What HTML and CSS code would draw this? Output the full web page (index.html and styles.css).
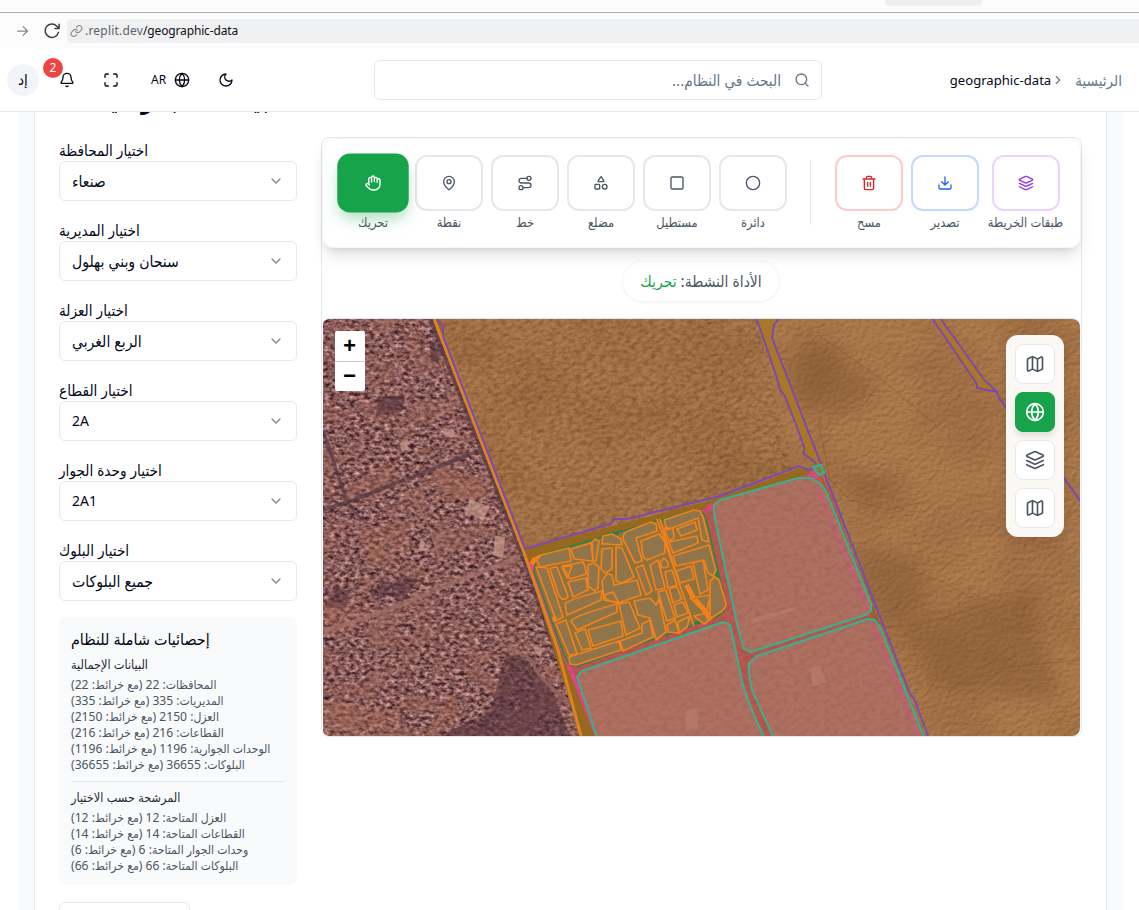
FILE: index.html
```html
<!DOCTYPE html>
<html lang="ar">
<head>
<meta charset="utf-8">
<title>geographic-data</title>
<link rel="stylesheet" href="styles.css">
</head>
<body>
<svg class="defs" width="0" height="0">
  <symbol id="i-map" viewBox="0 0 24 24"><path d="M14.106 5.553a2 2 0 0 0 1.788 0l3.659-1.83A1 1 0 0 1 21 4.619v12.764a1 1 0 0 1-.553.894l-4.553 2.277a2 2 0 0 1-1.788 0l-4.212-2.106a2 2 0 0 0-1.788 0l-3.659 1.83A1 1 0 0 1 3 19.381V6.618a1 1 0 0 1 .553-.894l4.553-2.277a2 2 0 0 1 1.788 0zM15 5.764v15M9 3.236v15"/></symbol>
  <symbol id="i-globe" viewBox="0 0 24 24"><circle cx="12" cy="12" r="10"/><path d="M12 2a14.5 14.5 0 0 0 0 20 14.5 14.5 0 0 0 0-20M2 12h20"/></symbol>
  <symbol id="i-layers" viewBox="0 0 24 24"><path d="m12.83 2.18a2 2 0 0 0-1.66 0L2.6 6.08a1 1 0 0 0 0 1.83l8.58 3.91a2 2 0 0 0 1.66 0l8.58-3.9a1 1 0 0 0 0-1.83ZM22 17.65l-9.17 4.16a2 2 0 0 1-1.66 0L2 17.65M22 12.65l-9.17 4.16a2 2 0 0 1-1.66 0L2 12.65"/></symbol>
  <symbol id="i-down" viewBox="0 0 24 24"><path d="m6 9 6 6 6-6"/></symbol>
</svg>

<div class="tabs"><span class="tab"></span></div>
<div class="browser">
  <svg class="ic forward" width="16" height="16" viewBox="0 0 24 24"><path d="M4 12h16M13 5l7 7-7 7"/></svg>
  <svg class="ic reload" width="18" height="18" viewBox="0 0 24 24"><path d="M20.500 14a9 9 0 1 1-2-8.400L21 8M21.500 3v5.500H16"/></svg>
  <div class="url">
    <svg class="ic link" width="14" height="14" viewBox="0 0 24 24"><path d="M10 13a5 5 0 0 0 7.540.540l3-3a5 5 0 0 0-7.070-7.070l-1.720 1.710M14 11a5 5 0 0 0-7.540-.540l-3 3a5 5 0 0 0 7.070 7.070l1.710-1.710"/></svg>
    <span class="host">.replit.dev</span><span class="path">/geographic-data</span>
  </div>
</div>

<header class="header">
  <div class="avatar">إد</div>
  <div class="bell">
    <svg class="ic" width="16" height="16" viewBox="0 0 24 24"><path d="M10.268 21a2 2 0 0 0 3.464 0M3.262 15.326A1 1 0 0 0 4 17h16a1 1 0 0 0 .740-1.673C19.410 13.956 18 12.499 18 8A6 6 0 0 0 6 8c0 4.499-1.411 5.956-2.738 7.326"/></svg>
    <span class="badge">2</span>
  </div>
  <svg class="ic full" width="16" height="16" viewBox="0 0 24 24"><path d="M8 3H5a2 2 0 0 0-2 2v3M21 8V5a2 2 0 0 0-2-2h-3M3 16v3a2 2 0 0 0 2 2h3M16 21h3a2 2 0 0 0 2-2v-3"/></svg>
  <span class="lang">AR</span>
  <svg class="ic globe" width="16" height="16"><use href="#i-globe"/></svg>
  <svg class="ic moon" width="16" height="16" viewBox="0 0 24 24"><path d="M12 3a6 6 0 0 0 9 9 9 9 0 1 1-9-9Z"/></svg>
  <div class="search">
    <span dir="rtl">البحث في النظام...</span>
    <svg class="ic" width="16" height="16" viewBox="0 0 24 24"><circle cx="11" cy="11" r="8"/><path d="m21 21-4.300-4.300"/></svg>
  </div>
  <nav class="crumbs">
    <span class="current">geographic-data</span>
    <svg class="ic" width="14" height="14" viewBox="0 0 24 24"><path d="m9 18 6-6-6-6"/></svg>
    <span class="home" dir="rtl">الرئيسية</span>
  </nav>
</header>

<main class="page">
 <section class="card">
  <div class="title-clip"><h3 class="title" dir="rtl">البيانات الجغرافية</h3></div>
  <div class="cols">
  <aside class="side">
    <div class="field"><label dir="rtl">اختيار المحافظة</label><div class="select"><span dir="rtl">صنعاء</span><svg class="ic" width="16" height="16"><use href="#i-down"/></svg></div></div>
    <div class="field"><label dir="rtl">اختيار المديرية</label><div class="select"><span dir="rtl">سنحان وبني بهلول</span><svg class="ic" width="16" height="16"><use href="#i-down"/></svg></div></div>
    <div class="field"><label dir="rtl">اختيار العزلة</label><div class="select"><span dir="rtl">الربع الغربي</span><svg class="ic" width="16" height="16"><use href="#i-down"/></svg></div></div>
    <div class="field"><label dir="rtl">اختيار القطاع</label><div class="select"><span class="latin">2A</span><svg class="ic" width="16" height="16"><use href="#i-down"/></svg></div></div>
    <div class="field"><label dir="rtl">اختيار وحدة الجوار</label><div class="select"><span class="latin">2A1</span><svg class="ic" width="16" height="16"><use href="#i-down"/></svg></div></div>
    <div class="field"><label dir="rtl">اختيار البلوك</label><div class="select"><span dir="rtl">جميع البلوكات</span><svg class="ic" width="16" height="16"><use href="#i-down"/></svg></div></div>
    <div class="stats" dir="rtl">
      <h4>إحصائيات شاملة للنظام</h4>
      <h5>البيانات الإجمالية</h5>
      <p>المحافظات: 22 (مع خرائط: 22)</p>
      <p>المديريات: 335 (مع خرائط: 335)</p>
      <p>العزل: 2150 (مع خرائط: 2150)</p>
      <p>القطاعات: 216 (مع خرائط: 216)</p>
      <p>الوحدات الجوارية: 1196 (مع خرائط: 1196)</p>
      <p>البلوكات: 36655 (مع خرائط: 36655)</p>
      <hr>
      <h5>المرشحة حسب الاختيار</h5>
      <p>العزل المتاحة: 12 (مع خرائط: 12)</p>
      <p>القطاعات المتاحة: 14 (مع خرائط: 14)</p>
      <p>وحدات الجوار المتاحة: 6 (مع خرائط: 6)</p>
      <p>البلوكات المتاحة: 66 (مع خرائط: 66)</p>
    </div>
    <div class="more"></div>
  </aside>

  <div class="viewer">
    <div class="toolbar">
      <div class="tool on"><button><svg class="ic" width="16" height="16" viewBox="0 0 24 24"><path d="M18 11V6a2 2 0 0 0-4 0M14 10V4a2 2 0 0 0-4 0v2M10 10.500V6a2 2 0 0 0-4 0v8M18 8a2 2 0 1 1 4 0v6a8 8 0 0 1-8 8h-2c-2.800 0-4.500-.860-5.990-2.340l-3.600-3.600a2 2 0 0 1 2.830-2.820L7 15"/></svg></button><span>تحريك</span></div>
      <div class="tool"><button><svg class="ic" width="16" height="16" viewBox="0 0 24 24"><path d="M20 10c0 4.993-5.539 10.193-7.399 11.799a1 1 0 0 1-1.202 0C9.539 20.193 4 14.993 4 10a8 8 0 0 1 16 0"/><circle cx="12" cy="10" r="3"/></svg></button><span>نقطة</span></div>
      <div class="tool"><button><svg class="ic" width="16" height="16" viewBox="0 0 24 24"><circle cx="6" cy="19" r="3"/><path d="M9 19h8.500a3.500 3.500 0 0 0 0-7h-11a3.500 3.500 0 0 1 0-7H15"/><circle cx="18" cy="5" r="3"/></svg></button><span>خط</span></div>
      <div class="tool"><button><svg class="ic" width="16" height="16" viewBox="0 0 24 24"><path d="M8.300 10a.7.7 0 0 1-.626-1.079L11.400 3a.7.7 0 0 1 1.198-.043L16.300 8.900a.7.7 0 0 1-.572 1.100Z"/><rect x="3" y="14" width="7" height="7" rx="1"/><circle cx="17.500" cy="17.500" r="3.500"/></svg></button><span>مضلع</span></div>
      <div class="tool"><button><svg class="ic" width="16" height="16" viewBox="0 0 24 24"><rect x="3" y="3" width="18" height="18" rx="2"/></svg></button><span>مستطيل</span></div>
      <div class="tool"><button><svg class="ic" width="16" height="16" viewBox="0 0 24 24"><circle cx="12" cy="12" r="10"/></svg></button><span>دائرة</span></div>
      <i class="rule"></i>
      <div class="tool red"><button><svg class="ic" width="16" height="16" viewBox="0 0 24 24"><path d="M3 6h18M19 6v14c0 1-1 2-2 2H7c-1 0-2-1-2-2V6M8 6V4c0-1 1-2 2-2h4c1 0 2 1 2 2v2M10 11v6M14 11v6"/></svg></button><span>مسح</span></div>
      <div class="tool blue"><button><svg class="ic" width="16" height="16" viewBox="0 0 24 24"><path d="M21 15v4a2 2 0 0 1-2 2H5a2 2 0 0 1-2-2v-4M7 10l5 5 5-5M12 15V3"/></svg></button><span>تصدير</span></div>
      <div class="tool purple"><button><svg class="ic" width="16" height="16"><use href="#i-layers"/></svg></button><span>طبقات الخريطة</span></div>
    </div>
    <div class="status" dir="rtl">الأداة النشطة: <b>تحريك</b></div>
    <div class="map">
      <svg class="canvas" viewBox="323 319 757 417" width="757" height="417">
        <defs>
          <filter id="city" x="0" y="0" width="1" height="1" color-interpolation-filters="sRGB">
            <feTurbulence type="fractalNoise" baseFrequency=".2 .29" numOctaves="3" seed="7" result="n"/>
            <feColorMatrix in="n" type="matrix" values="1.500 0 0 0 -.230  1.300 .1 0 0 -.350  1.200 .15 0 0 -.320  0 0 0 0 1"/>
          </filter>
          <filter id="earth" x="0" y="0" width="1" height="1" color-interpolation-filters="sRGB">
            <feTurbulence type="fractalNoise" baseFrequency=".03 .04" numOctaves="4" seed="21"/>
            <feColorMatrix type="matrix" values="0 0 0 0 .610  0 0 0 0 .395  0 0 0 0 .345  4 0 0 0 -1.800"/>
          </filter>
          <filter id="sand" x="0" y="0" width="1" height="1" color-interpolation-filters="sRGB">
            <feTurbulence type="fractalNoise" baseFrequency=".2 .25" numOctaves="3" seed="12"/>
            <feDiffuseLighting surfaceScale=".5" lighting-color="#be8653"><feDistantLight azimuth="230" elevation="62"/></feDiffuseLighting>
          </filter>
          <filter id="patches" x="0" y="0" width="1" height="1" color-interpolation-filters="sRGB">
            <feTurbulence type="fractalNoise" baseFrequency=".012 .018" numOctaves="3" seed="4"/>
            <feColorMatrix type="matrix" values="0 0 0 0 .350  0 0 0 0 .190  0 0 0 0 .090  1.600 0 0 0 -.680"/>
          </filter>
          <filter id="grain" x="0" y="0" width="1" height="1" color-interpolation-filters="sRGB">
            <feTurbulence type="fractalNoise" baseFrequency=".16 .24" numOctaves="3" seed="9"/>
            <feColorMatrix type="matrix" values="0 0 0 0 .300  0 0 0 0 .160  0 0 0 0 .120  2 0 0 0 -.850"/>
          </filter>
          <filter id="soft"><feGaussianBlur stdDeviation="9"/></filter>
          <clipPath id="west"><path d="M323 319H434L522 545 588 736H323Z"/></clipPath>
          <clipPath id="plots"><path d="M532 560 712 505 720 498 808 474 830 489 925 736H596L560 650Z"/></clipPath>
          <clipPath id="town"><path d="M443 325 525 549 720 498 795 469 756 319H440Z"/></clipPath>
        </defs>
        <rect x="323" y="319" width="757" height="417" fill="#a4723f" filter="url(#sand)"/>
        <g clip-path="url(#town)" opacity=".38"><rect x="434" y="319" width="370" height="232" filter="url(#grain)"/></g>
        <rect x="323" y="319" width="757" height="417" filter="url(#patches)" opacity=".22"/>
        <g filter="url(#soft)" fill="#6e4526" opacity=".32"><path d="M790 365 815 340 878 385 860 405 825 415 790 395ZM840 480 890 478 880 500 850 495ZM855 540 920 560 930 600 890 630 860 590ZM900 620 1030 590 1060 700 930 690Z"/></g>
        <g stroke="#80552f" stroke-width="1" fill="none" opacity=".5"><path d="M774 380 818 335 880 378 936 425M826 415 860 410 878 385M818 420 830 480 850 500 890 510 930 500M885 627 920 625 1000 600M943 690 1000 668 1080 660M880 560 940 580 975 600 1010 592M860 615 930 545"/></g>
        <g clip-path="url(#west)">
          <rect x="323" y="319" width="270" height="417" filter="url(#city)"/>
          <rect x="323" y="319" width="270" height="417" fill="#8c5f5a" opacity=".3"/>
          <rect x="323" y="319" width="270" height="417" filter="url(#earth)" opacity=".5"/>
          <g fill="#50303a" opacity=".55"><path d="M506 655 523 656 552 690 570 736H440L490 711ZM382 579 394 585 384 598 370 594ZM402 574 418 580 402 602 388 595ZM334 585 350 592 345 608 325 608ZM430 340 440 345 439 365 431 360ZM378 397 405 395 402 412 376 416Z"/></g>
          <g fill="#a96954" opacity=".3"><path d="M430 470 475 475 493 500 440 500ZM360 530 410 520 408 550 370 560ZM328 600 380 610 340 640 323 635ZM323 700 400 710 400 736H323ZM432 720 455 692 460 715 440 736H425Z"/></g>
          <g fill="#c69a8a" opacity=".7"><path d="M400 443 408 439 407 449 401 450ZM469 499 490 507 483 520 467 512ZM495 536 505 537 503 558 493 555ZM532 647 543 648 540 658ZM420 541 425 542 424 551 419 551ZM445 428 456 432 453 438 443 435Z"/></g>
          <g fill="none" stroke="#553a45" opacity=".7"><path d="M323 510 347 502 420 474 478 451" stroke-width="4"/><path d="M323 430 333 460 347 502 361 520" stroke-width="3.500"/><path d="M433 319 521 545 588 736" stroke-width="9"/></g>
          <g fill="none" stroke="#a17068" opacity=".7"><path d="M323 632 380 613 455 582 520 557" stroke-width="5"/><path d="M385 320 398 365 408 410M440 360 460 440M405 478 430 530 440 560M376 630 378 690" stroke-width="2"/></g>
          <path d="M520 655Q530 655 535 668T575 705L588 736" fill="none" stroke="#8c625c" stroke-width="3"/>
        </g>
        <path d="M522 545 525 549 720 498 800 468 812 471 808 476 720 500 712 507 534 562 596 736H580Z" fill="#96691f"/>
        <path d="M436 319H441L443 336 526 549 522 549Z" fill="#94662c"/>
        <g fill="#aa7627" stroke="#7c4bac" stroke-width="2" stroke-linejoin="round">
          <path d="M756 317 777 378 780 390 785 396 804 446 804 454 815 462 818 470 822 467 772 338 774 325 779 318"/>
          <path d="M932 318 977 384 977 388 997 392 989 384 985 381 940 318"/>
        </g>
        <path d="M532 560 540 555 712 507 714 501 722 500 808 474 820 472 830 489 871 612 925 736H596L560 650Z" fill="#b95750"/>
        <path d="M820 472 866 590 925 736H917L868 616 824 489Z" fill="#99632d"/>
        <g stroke="#e3458b" fill="none"><path d="M530 562 565 656 597 736" stroke-width="4"/><path d="M532 560 650 526 697 515 712 503" stroke-width="1.300"/><path d="M703 512 714 503 714 511ZM806 476 813 470 820 474 816 480Z" fill="#d94b76" stroke="none"/><path d="M815 480 868 613 922 736" stroke-width="3" opacity=".65"/></g>
        <path d="M434 319 523 550 558 650 581 736" stroke="#de831f" fill="none" stroke-width="3"/>
        <g stroke="#7c4bac" stroke-width="2" fill="none"><path d="M437 319 443 326 443 336 525 549 610 524 615 519 627 519 720 496 797 467 798 466 809 470 817 468M822 467 910 694 915 700 919 712 928 736M997 392 999 398 1006 407M1064 478 1081 502"/></g>
        <g fill="#ae7060">
          <path d="M714 505 720 500 798 478 811 478 821 484 826 491 871 604 871 611 865 615 751 652 744 649Q739 632 737 624L714 515Z"/>
          <path d="M749 663 757 656 868 619 875 620 880 627 924 737H773L752 690Q748 675 749 663Z"/>
          <path d="M577 677 582 671 723 622 730 625 732 633 742 681Q747 701 764 737H597Z"/>
        </g>
        <path d="M817 488 868 611M872 624 918 736" stroke="#c85a80" stroke-width="2" fill="none"/>
        <g clip-path="url(#plots)" opacity=".15"><rect x="530" y="474" width="400" height="262" filter="url(#grain)"/></g>
        <g fill="#b98274" opacity=".5"><path d="M751 619 794 607 795 611 752 624ZM810 668 820 665 826 682 813 687ZM686 710 697 708 698 728 686 730Z"/></g>
        <g fill="none" stroke="#37b18e" stroke-width="2" stroke-linejoin="round">
          <path d="M714 505 720 500 798 478 811 478 821 484 826 491 871 604 871 611 865 615 751 652 744 649Q739 632 737 624L714 515Z"/>
          <path d="M749 663 757 656 868 619 875 620 880 627 924 737H773L752 690Q748 675 749 663Z"/>
          <path d="M577 677 582 671 723 622 730 625 732 633 742 681Q747 701 764 737H597Z"/>
        </g>
        <path d="M813 467 821 465 824 473 819 475Z" fill="#7d8045" stroke="#37b18e" stroke-width="2"/>
        <path d="M536 560 541 555 694 510Q703 510 706 518L726 605Q726 613 716 617L578 666Q568 667 564 655L534 572Z" fill="#8c7340" stroke="#2f804b" stroke-width="1.500"/>
        <path d="M603 534 622 530 618 535 603 540ZM691 625 694 622 712 617 706 622ZM716 580 719 577 716 563 710 550ZM661 520 676 515 664 524Z" fill="#2f804b"/>
        <g fill="#90744a" stroke="#f38119" stroke-width="1.700" stroke-linejoin="round">
          <path d="M536 559Q537 556 541 555L569 548 571 561 540 567ZM571 549 591 543 593 561 574 559ZM592 542 595 539 599 541 596 561 593 561ZM536 567 547 568 563 617 556 621 553 612ZM550 569Q552 567 557 567L568 596Q566 600 562 599 558 596 557 590ZM562 566 583 562Q586 567 586 574L570 579ZM562 567 572 566 567 578ZM568 582 586 578 588 590 573 597ZM588 565 594 563 599 567 598 588 595 591 588 586ZM602 549 612 548 612 569 605 573 601 569ZM602 544 603 536 612 534 621 539 622 545 608 544ZM616 547 622 548 634 577 622 583 616 581ZM624 541Q621 534 628 531L651 522 656 524 657 531 636 538 642 561 635 563ZM641 541 659 534 665 542 665 553 647 560 643 557ZM664 520 694 510 700 511 703 517 709 542 702 540 698 518 667 530ZM664 528 673 528 674 538 669 541ZM677 529 695 522 697 530 681 536ZM669 542 697 536 698 543 673 553ZM673 556 709 545 716 570 713 576 708 573 704 560 676 566ZM676 571 691 566 694 579 680 583ZM693 563 703 560 708 590 700 594ZM636 568 643 565 652 591 646 595ZM650 565 658 560 665 588 656 590ZM660 562 664 558 668 562 668 567 662 568ZM565 604Q567 600 602 591L601 600 567 615ZM602 581 607 574 612 575 614 585 637 580 641 595 618 603 604 600ZM604 595 613 592 619 603 607 600ZM571 621Q573 616 617 604L617 612 577 630ZM619 604 629 602 640 628 626 635ZM634 601 650 598 656 605 659 599 666 632 656 640 650 618 638 615ZM658 592 666 590 675 618 667 621ZM556 624 566 620 577 654 569 655ZM575 633 585 629 591 648 582 650ZM588 630 621 621 623 636 593 646ZM569 657 619 641 621 650 576 665 570 664ZM620 641 642 633 642 624 650 620 653 637 623 651ZM665 572 672 570 677 585 668 588ZM669 588 677 587 682 599 673 603ZM674 605 683 602 688 613 677 617ZM690 598 710 595 707 611 699 607ZM710 581 715 577 719 580 726 604Q726 609 719 613L710 619ZM667 625 675 620 679 633 668 632ZM678 622 690 616 687 627 679 633ZM694 616 706 613 712 618 704 624Z"/>
        </g>
        <path d="M657 519 694 626M660 519 677 577" stroke="#f38119" stroke-width="1.800" fill="none"/>
        <path d="M684 586 689 584 696 597 692 600ZM693 600 697 598 710 613 708 621 704 614ZM530 563 532 558 543 554 537 561 533 566ZM552 617 556 616 557 621 553 622Z" fill="#f38119"/>
      </svg>
      <div class="zoom"><span>+</span><span>−</span></div>
      <div class="switch">
        <button><svg class="ic" width="20" height="20"><use href="#i-map"/></svg></button>
        <button class="on"><svg class="ic" width="20" height="20"><use href="#i-globe"/></svg></button>
        <button><svg class="ic" width="20" height="20"><use href="#i-layers"/></svg></button>
        <button><svg class="ic" width="20" height="20"><use href="#i-map"/></svg></button>
      </div>
    </div>
  </div>
  </div>
 </section>
</main>
</body>
</html>
```

FILE: styles.css
```css
* { box-sizing: border-box; }
body { margin: 0; height: 910px; overflow: hidden; background: #fff; color: #020817; font: 14px/20px "Noto Sans", "DejaVu Sans Condensed", "DejaVu Sans", sans-serif; }
h3, h4, h5, p { margin: 0; font-weight: 400; }
button { padding: 0; background: #fff; color: inherit; font: inherit; }
.defs { display: block; position: absolute; }
.ic { display: block; flex: none; fill: none; stroke: currentColor; stroke-width: 2; stroke-linecap: round; stroke-linejoin: round; }

.tabs { height: 13px; background: #fcfcfc; border-bottom: 1px solid #adadad; padding-left: 885px; }
.tab { display: block; width: 97px; height: 6px; background: #efeff1; border-radius: 0 0 4px 4px; }
.browser { height: 35px; background: #fcfcfc; display: flex; align-items: center; padding-left: 15px; }
.forward, .link { color: #85888c; }
.forward { width: 15px; }
.reload { margin: 0 7px 0 13px; color: #3c4043; }
.url { flex: 1; height: 24px; margin-left: -1px; background: #eff0f2; border-radius: 4px 0 0 4px; display: flex; align-items: center; padding-left: 3px; font-size: 12px; }
.link { width: 13px; margin-right: 1px; }
.host { color: #5f6368; margin-left: 1px; letter-spacing: .2px; }
.path { color: #111; letter-spacing: -.15px; }

.header { height: 64px; border-bottom: 1px solid #e2e8f0; display: flex; align-items: center; position: relative; background: #fff; }
.avatar { width: 32px; height: 32px; margin-left: 7px; border-radius: 50%; background: #f1f5f9; text-align: center; line-height: 31px; font-size: 15px; }
.bell { position: relative; margin-left: 20px; }
.badge { position: absolute; left: -16px; top: -14px; width: 20px; height: 20px; border-radius: 50%; background: #ef4444; color: #fff; font-size: 12px; line-height: 19px; text-align: center; }
.full { margin-left: 28px; }
.lang { margin-left: 32px; font-size: 12px; width: 15px; }
.globe { margin-left: 8px; }
.moon { margin-left: 28px; }
.search { margin-left: 140px; width: 448px; height: 40px; border: 1px solid #e2e8f0; border-radius: 6px; display: flex; align-items: center; justify-content: flex-end; gap: 13px; padding-right: 11px; color: #64748b; font-size: 15.3px; }
.crumbs { margin-left: auto; margin-right: 17px; display: flex; align-items: center; color: #64748b; }
.crumbs .current { color: #020817; font-size: 13.1px; }
.home { margin-left: 10px; font-size: 15.1px; }

.page { margin: 0 16px 0 18px; height: 798px; background: #f8fafc; padding: 0 16px; overflow: hidden; }
.card { height: 100%; background: #fff; border: solid #e2e8f0; border-width: 0 1px; padding: 0 24px; }
.title-clip { height: 25px; overflow: hidden; }
.title { margin: -28px 0 0 16px; width: 211px; font-size: 24.5px; line-height: 32px; font-weight: 700; white-space: nowrap; text-align: right; }
.cols { display: grid; grid-template-columns: 238px 761px; gap: 24px; }
.side { padding-top: 4px; }
.field { height: 80px; }
.field label { display: block; width: max-content; height: 20px; line-height: 18px; font-size: 15.2px; }
.select { height: 40px; border: 1px solid #e2e8f0; border-radius: 6px; padding: 0 12px; display: flex; align-items: center; justify-content: space-between; font-size: 15.6px; }
.select .latin { font-size: 14px; }
.select .ic { color: #808389; }
.stats { margin-top: -4px; height: 268px; padding: 12px 12px 0; background: #f9fafb; border-radius: 8px; text-align: left; }
.stats h4 { font-size: 15.9px; line-height: 20px; }
.stats h5 { font-size: 12.6px; line-height: 16px; margin: 8px 0 4px; color: #1f2937; }
.stats p { font-size: 12.1px; line-height: 16px; color: #4b5563; white-space: nowrap; }
.stats hr { border: 0; height: 1px; margin: 8px 0; background: #e5e7eb; }
.more { margin-top: 17px; width: 131px; height: 40px; border: 1px solid #e2e8f0; border-radius: 6px; }

.viewer { height: 600px; border: 1px solid #e2e8f0; border-radius: 8px; }
.toolbar { height: 110px; border: 1px solid #f3f4f6; border-radius: 12px; box-shadow: 0 10px 15px -3px rgba(0,0,0,.13), 0 4px 6px -4px rgba(0,0,0,.12); display: flex; padding: 16px 15px 0 16px; gap: 8px; }
.tool { display: flex; flex-direction: column; align-items: center; gap: 4px; height: 76px; color: #4b5563; font-size: 12.8px; line-height: 15px; white-space: nowrap; min-width: 68px; }
.tool button { width: 68px; height: 56px; border: 2px solid #e5e7eb; border-radius: 12px; display: flex; align-items: center; justify-content: center; }
.tool.on button { background: #16a34a; border-color: #16a34a; color: #fff; transform: scale(1.05); box-shadow: 0 8px 14px -2px rgba(22,163,74,.35); }
.tool.red button { border-color: #fecaca; color: #dc2626; }
.tool.blue button { border-color: #bfdbfe; color: #2563eb; }
.tool.purple button { border-color: #e9d5ff; color: #9333ea; }
.tool.purple { width: 77px; }
.rule { width: 1px; height: 64px; background: #e5e7eb; margin: 6px 16px 0 15px; }
.status { width: 158px; height: 42px; margin: 12px 0 16px 300px; border: 1px solid #f3f4f6; border-radius: 21px; box-shadow: 0 1px 2px rgba(0,0,0,.05); text-align: center; line-height: 41px; color: #4b5563; white-space: nowrap; font-size: 15.5px; }
.status b { color: #16a34a; font-weight: 400; }
.map { position: relative; width: 758px; height: 418px; border-radius: 8px; overflow: hidden; border: solid #e2e8f0; border-width: 1px 0 0; }
.canvas { display: block; margin-left: 1px; width: 757px; height: 417px; border-radius: 6px; }
.zoom { position: absolute; left: 13px; top: 12px; width: 30px; height: 60px; background: #fff; border-radius: 2px; color: #000; font: bold 22px/34px "Liberation Mono", monospace; text-align: center; }
.zoom span { display: block; height: 30px; padding-right: 1px; }
.zoom span + span { border-top: 1px solid #ccc; line-height: 31px; }
.switch { position: absolute; left: 684px; top: 16px; width: 58px; height: 202px; padding: 9px; background: rgba(255,255,255,.95); border-radius: 12px; box-shadow: 0 4px 12px rgba(0,0,0,.12); display: flex; flex-direction: column; gap: 8px; color: #4b5563; }
.switch button { height: 40px; border: 1px solid #e5e7eb; border-radius: 8px; display: flex; align-items: center; justify-content: center; }
.switch .on { background: #16a34a; border-color: #16a34a; color: #fff; box-shadow: 0 4px 6px rgba(0,0,0,.1); }
```
